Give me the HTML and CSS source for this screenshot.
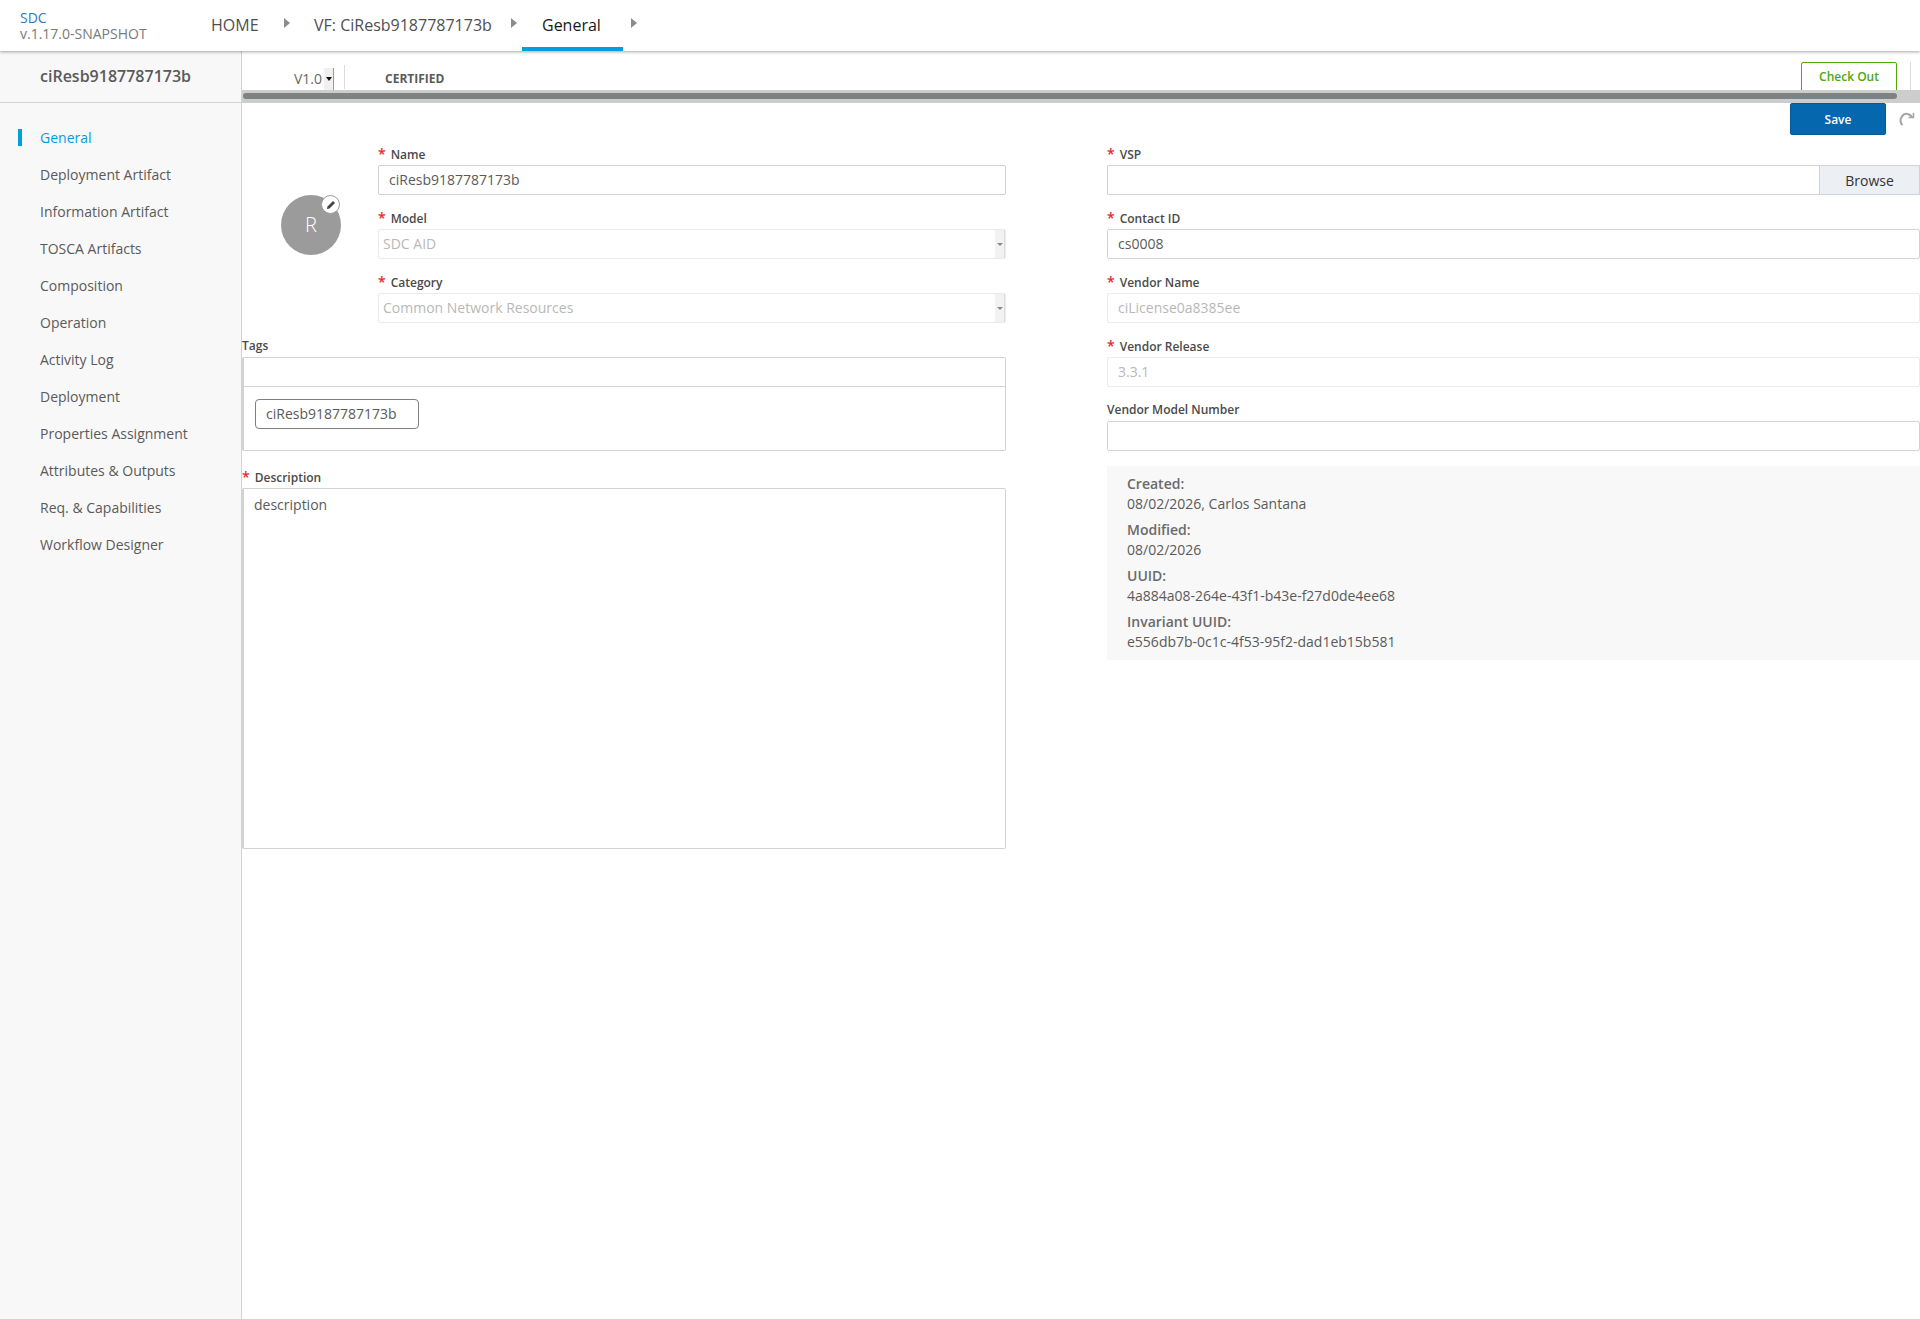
FILE: index.html
```html
<!DOCTYPE html>
<html lang="en">
<head>
    <meta charset="UTF-8">
    <title>SDC</title>
    <link rel="stylesheet" href="styles.css">
</head>
<body>
    <!-- Top navigation -->
    <header class="top-nav">
        <div class="brand">
            <div class="brand-name">SDC</div>
            <div class="brand-version">v.1.17.0-SNAPSHOT</div>
        </div>
        <nav class="crumbs">
            <a class="crumb crumb-home">HOME</a>
            <span class="crumb-arrow"></span>
            <a class="crumb crumb-vf">VF: CiResb9187787173b</a>
            <span class="crumb-arrow"></span>
            <a class="crumb crumb-active">General</a>
            <span class="crumb-arrow"></span>
        </nav>
    </header>

    <div class="workspace">
        <!-- Left menu -->
        <aside class="sidebar">
            <div class="sidebar-title">ciResb9187787173b</div>
            <ul class="menu">
                <li class="menu-item active">General</li>
                <li class="menu-item">Deployment Artifact</li>
                <li class="menu-item">Information Artifact</li>
                <li class="menu-item">TOSCA Artifacts</li>
                <li class="menu-item">Composition</li>
                <li class="menu-item">Operation</li>
                <li class="menu-item">Activity Log</li>
                <li class="menu-item">Deployment</li>
                <li class="menu-item">Properties Assignment</li>
                <li class="menu-item">Attributes &amp; Outputs</li>
                <li class="menu-item">Req. &amp; Capabilities</li>
                <li class="menu-item">Workflow Designer</li>
            </ul>
        </aside>

        <main class="content">
            
            <div class="version-bar">
                <div class="version-inner">
                    <span class="version-label">V1.0</span>
                    <span class="version-select"><i class="arrow-down"></i></span>
                    <span class="divider"></span>
                    <span class="status">CERTIFIED</span>
                    <button class="btn-checkout">Check Out</button>
                    <span class="divider divider-close"></span>
                    <span class="close">
                        <svg class="close-icon" viewBox="0 0 12 12" fill="none" stroke="#5a5a5a" stroke-width="1.3">
                            <path d="M1 1l10 10M11 1L1 11"/>
                        </svg>
                        Close
                    </span>
                </div>
            </div>
            <div class="scrollbar"><div class="scrollbar-thumb"></div></div>

            <div class="actions">
                <button class="btn-save">Save</button>
                <svg class="redo-icon" viewBox="0 0 16 16" fill="none" stroke="#a3a5a6" stroke-width="2">
                    <path d="M13 6.5A5.6 5.6 0 0 0 3 5.5a6 6 0 0 0 .5 8.5"/>
                    <path d="M9.5 6.5h5V2" stroke-width="1.6"/>
                </svg>
            </div>

            <div class="form">
                <!-- Left column -->
                <section class="col">
                    <div class="icon-row">
                        <div class="avatar-wrap">
                            <div class="avatar">R
                                <span class="avatar-edit">
                                    <svg viewBox="0 0 12 12" fill="#444">
                                        <path d="M8.4 1.2l2.4 2.4-6.6 6.6-3 .6.6-3z"/>
                                    </svg>
                                </span>
                            </div>
                        </div>
                        <div class="icon-fields">
                            <div class="group">
                                <label class="label required">Name</label>
                                <div class="field">ciResb9187787173b</div>
                            </div>
                            <div class="group">
                                <label class="label required">Model</label>
                                <div class="field disabled select">SDC AID<span class="select-btn"><i></i></span></div>
                            </div>
                            <div class="group">
                                <label class="label required">Category</label>
                                <div class="field disabled select">Common Network Resources<span class="select-btn"><i></i></span></div>
                            </div>
                        </div>
                    </div>
                    <div class="group">
                        <label class="label">Tags</label>
                        <div class="tags">
                            <div class="tags-input"></div>
                            <div class="tags-list"><span class="tag">ciResb9187787173b</span></div>
                        </div>
                    </div>
                    <div class="group group-description">
                        <label class="label required">Description</label>
                        <div class="textarea">description</div>
                    </div>
                </section>

                <!-- Right column -->
                <section class="col">
                    <div class="group">
                        <label class="label required">VSP</label>
                        <div class="browse-row">
                            <div class="field browse-input"></div>
                            <button class="btn-browse">Browse</button>
                        </div>
                    </div>
                    <div class="group">
                        <label class="label required">Contact ID</label>
                        <div class="field field-wide">cs0008</div>
                    </div>
                    <div class="group">
                        <label class="label required">Vendor Name</label>
                        <div class="field field-wide disabled">ciLicense0a8385ee</div>
                    </div>
                    <div class="group">
                        <label class="label required">Vendor Release</label>
                        <div class="field field-wide disabled">3.3.1</div>
                    </div>
                    <div class="group">
                        <label class="label">Vendor Model Number</label>
                        <div class="field field-wide"></div>
                    </div>
                    <div class="info">
                        <div class="info-title">Created:</div>
                        <div class="info-value">08/02/2026, Carlos Santana</div>
                        <div class="info-title">Modified:</div>
                        <div class="info-value">08/02/2026</div>
                        <div class="info-title">UUID:</div>
                        <div class="info-value">4a884a08-264e-43f1-b43e-f27d0de4ee68</div>
                        <div class="info-title">Invariant UUID:</div>
                        <div class="info-value">e556db7b-0c1c-4f53-95f2-dad1eb15b581</div>
                    </div>
                </section>
            </div>
        </main>
    </div>
</body>
</html>
```

FILE: styles.css
```css
/* Base */
:root {
    --blue: #009fdb;
    --border: #d2d2d2;
    --border-light: #eaeaea;
    --text: #5a5a5a;
    --text-dark: #191919;
    --text-muted: #b8b8b8;
    --panel: #f8f8f8;
}

* {
    margin: 0;
    padding: 0;
    box-sizing: border-box;
}

html, body {
    height: 100%;
}

body {
    font-family: "Open Sans", sans-serif;
    font-size: 14px;
    color: var(--text);
    background: #ffffff;
    overflow: hidden;
    display: flex;
    flex-direction: column;
}

/* Top navigation */
.top-nav {
    height: 51px;
    flex: none;
    display: flex;
    background: #ffffff;
    box-shadow: 0 1px 3px rgb(0 0 0 / 0.35);
    position: relative;
    z-index: 2;
}

.brand {
    width: 211px;
    padding: 10px 0 0 20px;
    font-size: 14px;
    line-height: 16px;
}

.brand-name {
    color: #2f7ab8;
}

.brand-version {
    color: #7a7a7a;
}

.crumbs {
    display: flex;
    align-items: stretch;
}

.crumb {
    font-size: 16px;
    line-height: 50px;
    color: #4f4f4f;
    height: 51px;
}

.crumb-home {
    width: 73px;
}

.crumb-vf {
    width: 197px;
    padding-left: 0;
}

.crumb-active {
    color: var(--text-dark);
    width: 101px;
    padding-left: 20px;
    border-bottom: 4px solid var(--blue);
}

.crumb-arrow {
    width: 0;
    height: 0;
    margin: 18px 0 0 0;
    border-left: 6px solid #8c8c8c;
    border-top: 5px solid transparent;
    border-bottom: 5px solid transparent;
}

.crumb-arrow:nth-child(2) {
    margin-right: 24px;
}

.crumb-arrow:nth-child(4) {
    margin-right: 5px;
}

.crumb-arrow:last-child {
    margin-left: 8px;
}

/* Layout */
.workspace {
    flex: 1;
    display: flex;
    min-height: 0;
}

.sidebar {
    width: 242px;
    flex: none;
    background: var(--panel);
    border-right: 1px solid var(--border);
}

.sidebar-title {
    height: 52px;
    padding-left: 40px;
    line-height: 51px;
    font-size: 16px;
    font-weight: 600;
    border-bottom: 1px solid var(--border);
}

.menu {
    list-style: none;
    padding-top: 17px;
}

.menu-item {
    height: 37px;
    line-height: 36px;
    padding-left: 40px;
    position: relative;
}

.menu-item.active {
    color: var(--blue);
}

.menu-item.active::before {
    content: '';
    position: absolute;
    left: 18px;
    top: 9px;
    width: 4px;
    height: 17px;
    background: var(--blue);
}

.content {
    flex: 1;
    min-width: 0;
    overflow: hidden;
}

/* Version bar */
.version-bar {
    height: 39px;
    overflow: hidden;
}

.version-inner {
    width: 1760px;
    height: 39px;
    display: flex;
    align-items: flex-start;
}

.version-label {
    margin: 18px 0 0 52px;
    line-height: 19px;
    color: #6a6a6a;
}

.version-select {
    width: 10px;
    height: 23px;
    margin: 17px 0 0 2px;
    background: #f0f0f0;
    border-right: 1px solid #9a9a9a;
    border-bottom: 1px solid #9a9a9a;
    display: flex;
    align-items: center;
    justify-content: center;
}

.arrow-down {
    width: 0;
    height: 0;
    border-left: 3px solid transparent;
    border-right: 3px solid transparent;
    border-top: 4px solid #111111;
}

.divider {
    width: 1px;
    height: 24px;
    margin: 14px 0 0 10px;
    background: #dcdcdc;
}

.status {
    margin: 19px 0 0 40px;
    font-size: 12px;
    line-height: 17px;
    font-weight: 700;
    flex: 1;
}

.btn-checkout {
    width: 96px;
    height: 36px;
    margin-top: 11px;
    background: #ffffff;
    border: 1px solid #4ca90c;
    border-radius: 2px;
    color: #4ca90c;
    font: 600 12px "Open Sans", sans-serif;
    padding-bottom: 8px;
}

.divider-close {
    height: 28px;
    margin: 11px 0 0 13px;
}

.close {
    margin: 13px 0 0 31px;
    width: 60px;
    display: flex;
    align-items: center;
    gap: 6px;
    line-height: 19px;
}

.close-icon {
    width: 11px;
    height: 11px;
    margin-top: 6px;
}

/* Fake horizontal scrollbar */
.scrollbar {
    height: 13px;
    background: #cdcdcd;
    padding: 3px 23px 0 1px;
}

.scrollbar-thumb {
    height: 6px;
    background: #7f8283;
    border-radius: 3px;
}

/* Save row */
.actions {
    height: 33px;
    display: flex;
    justify-content: flex-end;
    align-items: flex-start;
    padding-right: 5px;
}

.btn-save {
    width: 96px;
    height: 32px;
    background: #0568ae;
    border: 1px solid #045a96;
    border-radius: 2px;
    color: #ffffff;
    font: 600 12px "Open Sans", sans-serif;
}

.redo-icon {
    width: 16px;
    height: 16px;
    margin: 8px 0 0 13px;
}

/* Form */
.form {
    display: grid;
    grid-template-columns: 764px 813px;
    column-gap: 101px;
    padding-top: 8px;
}

.group {
    display: flex;
    flex-direction: column;
    margin-bottom: 13px;
}

.icon-row {
    display: flex;
}

.avatar-wrap {
    width: 136px;
    flex: none;
    padding: 51px 0 0 39px;
}

.avatar {
    width: 60px;
    height: 60px;
    border-radius: 50%;
    background: #9b9b9b;
    color: #ffffff;
    font-size: 20px;
    font-weight: 300;
    line-height: 60px;
    text-align: center;
    position: relative;
}

.avatar-edit {
    position: absolute;
    top: 0;
    right: 1px;
    width: 19px;
    height: 19px;
    border-radius: 50%;
    background: #ffffff;
    border: 1px solid #9b9b9b;
    display: flex;
    align-items: center;
    justify-content: center;
}

.avatar-edit svg {
    width: 10px;
    height: 10px;
}

.icon-fields {
    flex: 1;
}

.label {
    font-size: 12px;
    font-weight: 600;
    line-height: 16px;
    height: 21px;
    padding-top: 2px;
    color: #4a4a4a;
}

.label.required::before {
    content: '*';
    color: #e8262d;
    margin-right: 5px;
    font-size: 14px;
}

.field {
    height: 30px;
    line-height: 28px;
    padding-left: 10px;
    border: 1px solid var(--border);
    border-radius: 2px;
    position: relative;
}

.field-wide {
    width: 813px;
}

.field.disabled {
    border-color: var(--border-light);
    color: var(--text-muted);
}

.field.select {
    padding-left: 4px;
}

.select-btn {
    position: absolute;
    top: 0;
    right: 0;
    width: 10px;
    height: 28px;
    background: #f2f2f2;
    border-right: 1px solid #dddddd;
    display: flex;
    align-items: center;
    justify-content: center;
}

.select-btn i {
    width: 0;
    height: 0;
    border-left: 3px solid transparent;
    border-right: 3px solid transparent;
    border-top: 3px solid #8a8a8a;
}

/* Tags */
.tags {
    height: 94px;
    border: 1px solid var(--border);
    border-left-width: 2px;
    border-radius: 2px;
}

.tags-input {
    height: 29px;
    border-bottom: 1px solid var(--border);
}

.tags-list {
    padding: 12px 11px;
}

.tag {
    display: block;
    width: 164px;
    height: 30px;
    line-height: 28px;
    padding-left: 10px;
    border: 1px solid #7f7f7f;
    border-radius: 4px;
}

.group-description {
    margin-top: 16px;
}

.textarea {
    height: 361px;
    padding: 6px 10px;
    line-height: 19px;
    border: 1px solid var(--border);
    border-left-width: 2px;
    border-radius: 2px;
}

/* Right column */
.browse-row {
    display: flex;
}

.browse-input {
    flex: 1;
    border-right: 0;
    border-radius: 2px 0 0 2px;
}

.btn-browse {
    width: 101px;
    height: 30px;
    background: #eceff3;
    border: 1px solid var(--border);
    color: #333333;
    font: 14px "Open Sans", sans-serif;
}

.info {
    margin-top: 15px;
    height: 194px;
    padding: 8px 20px 0;
    background: var(--panel);
    line-height: 20px;
}

.info-title {
    font-weight: 600;
    color: #6a6a6a;
    margin-top: 6px;
}

.info-title:first-child {
    margin-top: 0;
}
```
